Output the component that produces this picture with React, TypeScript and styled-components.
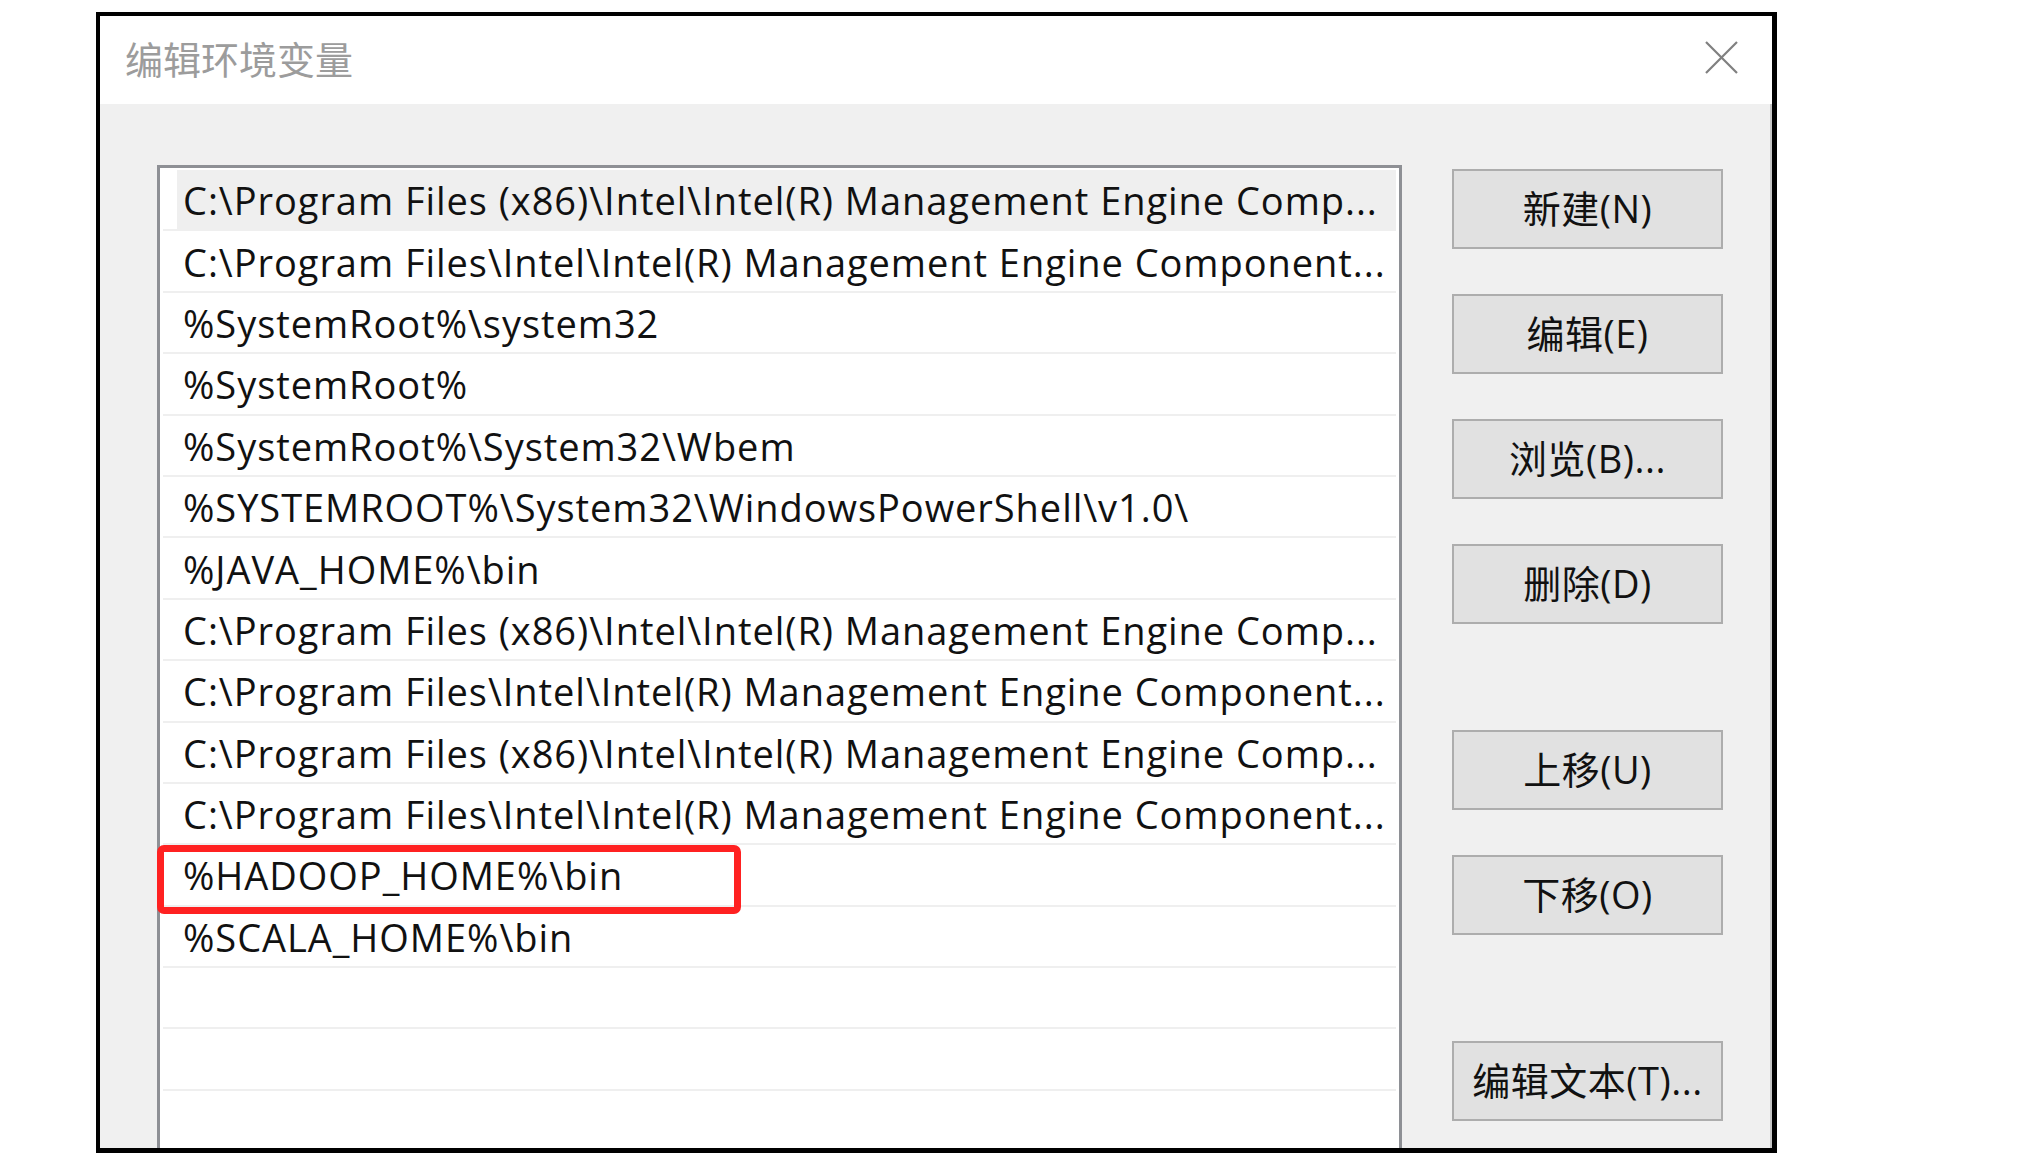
import React from 'react';
import styled, { createGlobalStyle } from 'styled-components';

const GlobalStyle = createGlobalStyle`
  html, body { margin: 0; padding: 0; background: #ffffff; }
  body { font-family: "Open Sans", "Noto Sans CJK SC", sans-serif; }
`;

const Page = styled.div`
  padding: 12px 0 0 96px;
`;

const Window = styled.div`
  box-sizing: border-box;
  width: 1681px;
  height: 1141px;
  border-style: solid;
  border-color: #000;
  border-width: 4px 5px 5px 4px;
  display: flex;
  flex-direction: column;
  overflow: hidden;
`;

const TitleBar = styled.div`
  flex: none;
  height: 88px;
  background: #ffffff;
  display: flex;
  align-items: center;
  justify-content: space-between;
  padding: 0 34px 0 25px;
`;

const Title = styled.div`
  font-family: "Noto Sans CJK SC", sans-serif;
  font-size: 38px;
  line-height: 1;
  color: #9c9c9c;
  margin-top: -5px;
`;

const CloseButton = styled.button`
  border: 0;
  background: none;
  padding: 0;
  width: 33px;
  height: 33px;
  display: flex;
  align-items: center;
  justify-content: center;
  margin-top: -5px;
`;

const Body = styled.div`
  flex: 1;
  min-height: 0;
  background: #f0f0f0;
  border-right: 2px solid #c4c4c4;
  display: flex;
  align-items: flex-start;
  gap: 50px;
  padding: 61px 0 0 57px;
  overflow: hidden;
`;

const List = styled.div`
  flex: none;
  box-sizing: border-box;
  width: 1245px;
  height: 1100px;
  background: #ffffff;
  border: 3px solid #8e9095;
  padding: 2px 3px 0 3px;
  display: flex;
  flex-direction: column;
`;

const Row = styled.div`
  position: relative;
  box-sizing: border-box;
  height: 61.4px;
  flex: none;
  border-bottom: 2px solid #efefef;
  display: flex;
  padding-left: 14px;
`;

const Cell = styled.div<{ $selected?: boolean }>`
  flex: 1;
  min-width: 0;
  display: flex;
  align-items: center;
  padding: 1px 0 0 6px;
  background: ${(p) => (p.$selected ? '#efefef' : 'transparent')};
  font-family: "Open Sans", sans-serif;
  font-size: 38px;
  letter-spacing: 0.95px;
  color: #111;
  white-space: nowrap;
  overflow: hidden;
`;

const Annotation = styled.div`
  position: absolute;
  left: -6px;
  top: 0;
  width: 584px;
  height: 69px;
  box-sizing: border-box;
  border: 7px solid #ff2121;
  border-radius: 7px;
  pointer-events: none;
  z-index: 2;
`;

const ButtonColumn = styled.div`
  flex: none;
  width: 271px;
  margin-top: 4px;
  display: flex;
  flex-direction: column;
  gap: 106px;
`;

const ButtonGroup = styled.div`
  display: flex;
  flex-direction: column;
  gap: 45px;
`;

const DialogButton = styled.button`
  box-sizing: border-box;
  width: 271px;
  height: 80px;
  border: 2px solid #adadad;
  background: #e1e1e1;
  padding: 0 0 6px 0;
  font-family: "Open Sans", "Noto Sans CJK SC", sans-serif;
  font-size: 38px;
  letter-spacing: 0.5px;
  color: #111;
  display: flex;
  align-items: center;
  justify-content: center;
`;

const rows: { text: string; selected?: boolean; marked?: boolean }[] = [
  { text: 'C:\\Program Files (x86)\\Intel\\Intel(R) Management Engine Comp...', selected: true },
  { text: 'C:\\Program Files\\Intel\\Intel(R) Management Engine Component...' },
  { text: '%SystemRoot%\\system32' },
  { text: '%SystemRoot%' },
  { text: '%SystemRoot%\\System32\\Wbem' },
  { text: '%SYSTEMROOT%\\System32\\WindowsPowerShell\\v1.0\\' },
  { text: '%JAVA_HOME%\\bin' },
  { text: 'C:\\Program Files (x86)\\Intel\\Intel(R) Management Engine Comp...' },
  { text: 'C:\\Program Files\\Intel\\Intel(R) Management Engine Component...' },
  { text: 'C:\\Program Files (x86)\\Intel\\Intel(R) Management Engine Comp...' },
  { text: 'C:\\Program Files\\Intel\\Intel(R) Management Engine Component...' },
  { text: '%HADOOP_HOME%\\bin', marked: true },
  { text: '%SCALA_HOME%\\bin' },
  { text: '' },
  { text: '' },
  { text: '' },
  { text: '' },
];

const groups = [
  ['新建(N)', '编辑(E)', '浏览(B)...', '删除(D)'],
  ['上移(U)', '下移(O)'],
  ['编辑文本(T)...'],
];

export default function App() {
  return (
    <Page>
      <GlobalStyle />
      <Window>
        <TitleBar>
          <Title>编辑环境变量</Title>
          <CloseButton aria-label="关闭">
            <svg width="33" height="33" viewBox="0 0 33 33">
              <path d="M1 1 L32 32 M32 1 L1 32" stroke="#808080" strokeWidth="2.2" fill="none" />
            </svg>
          </CloseButton>
        </TitleBar>
        <Body>
          <List>
            {rows.map((r, i) => (
              <Row key={i}>
                <Cell $selected={r.selected}>{r.text}</Cell>
                {r.marked && <Annotation />}
              </Row>
            ))}
          </List>
          <ButtonColumn>
            {groups.map((g, gi) => (
              <ButtonGroup key={gi}>
                {g.map((label) => (
                  <DialogButton key={label}>{label}</DialogButton>
                ))}
              </ButtonGroup>
            ))}
          </ButtonColumn>
        </Body>
      </Window>
    </Page>
  );
}
